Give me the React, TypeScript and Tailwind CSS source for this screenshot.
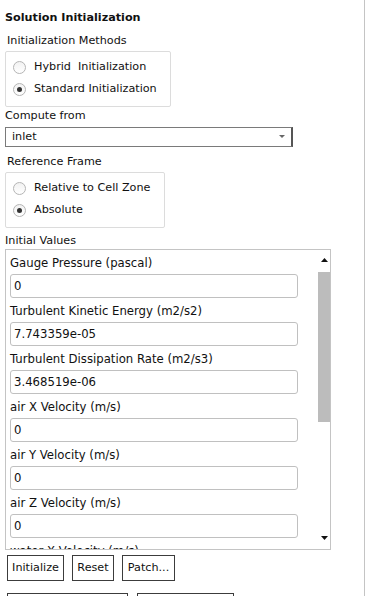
import React from 'react';

const fields = [
    { label: 'Gauge Pressure (pascal)', value: '0' },
    { label: 'Turbulent Kinetic Energy (m2/s2)', value: '7.743359e-05' },
    { label: 'Turbulent Dissipation Rate (m2/s3)', value: '3.468519e-06' },
    { label: 'air X Velocity (m/s)', value: '0' },
    { label: 'air Y Velocity (m/s)', value: '0' },
    { label: 'air Z Velocity (m/s)', value: '0' },
    { label: 'water X Velocity (m/s)', value: '0' },
];

function Radio({ label, checked }: { label: string; checked?: boolean }) {
    return (
        <div className="flex h-[22px] items-center gap-[8px]">
            <span className="flex h-[13px] w-[13px] items-center justify-center rounded-full border border-[#b5b5b5] bg-gradient-to-b from-[#f2f2f2] to-white">
                {checked && <span className="h-[5px] w-[5px] rounded-full bg-[#333]" />}
            </span>
            <span className="whitespace-pre">{label}</span>
        </div>
    );
}

function GroupBox({ width, children }: { width: string; children: React.ReactNode }) {
    return <div className={`mt-[3px] ml-[5px] shrink-0 rounded-[2px] border border-[#dcdcdc] pt-[4px] pb-[6px] pl-[7px] ${width}`}>{children}</div>;
}

function Btn({ label, width }: { label: string; width: string }) {
    return <div className={`flex h-[26px] items-center justify-center border border-[#3c3c3c] bg-white ${width}`}>{label}</div>;
}

export default function App() {
    return (
        <div className="flex h-[596px] w-[368px] overflow-hidden bg-white text-[11.2px] leading-[14px] text-[#111]" style={{ fontFamily: '"DejaVu Sans", Verdana, sans-serif' }}>
            <div className="flex w-[364px] flex-col *:shrink-0">
                <h1 className="mt-[11px] ml-[5px] font-bold">Solution Initialization</h1>
                <div className="mt-[9px] ml-[7px]">Initialization Methods</div>
                <GroupBox width="w-[166px]">
                    <Radio label="Hybrid  Initialization" />
                    <Radio label="Standard Initialization" checked />
                </GroupBox>
                <div className="mt-[2px] ml-[5px]">Compute from</div>
                <div className="mt-[4px] ml-[5px] flex h-[20px] w-[288px] items-center justify-between border border-[#7a7a7a] border-r-2 border-r-[#555] pl-[6px] pr-[6px]">
                    <span>inlet</span>
                    <svg width="6" height="4" viewBox="0 0 6 4">
                        <path d="M0 0h6L3 3z" fill="#666" />
                    </svg>
                </div>
                <div className="mt-[8px] ml-[7px]">Reference Frame</div>
                <GroupBox width="w-[160px]">
                    <Radio label="Relative to Cell Zone" />
                    <Radio label="Absolute" checked />
                </GroupBox>
                <div className="mt-[6px] ml-[5px]">Initial Values</div>
                <div className="mt-[1px] ml-[5px] flex h-[301px] w-[326px] border border-[#c4c4c4]">
                    <div className="flex flex-1 flex-col overflow-hidden pt-[6px] pl-[4px] text-[11.7px]">
                        {fields.map((f) => (
                            <div key={f.label} className="mb-[6px] flex shrink-0 flex-col">
                                <div className="whitespace-nowrap">{f.label}</div>
                                <div className="mt-[4px] flex h-[24px] w-[288px] shrink-0 items-center rounded-[3px] border border-[#c0c0c0] pl-[3px]">{f.value}</div>
                            </div>
                        ))}
                    </div>
                    <div className="flex w-[12px] flex-col items-center">
                        <svg className="mt-[8px] shrink-0" width="7" height="4" viewBox="0 0 7 4">
                            <path d="M3.5 0L7 4H0z" fill="#111" />
                        </svg>
                        <div className="mt-[10px] h-[150px] w-[12px] shrink-0 bg-[#bcbcbc]" />
                        <svg className="mt-auto mb-[9px] shrink-0" width="7" height="4" viewBox="0 0 7 4">
                            <path d="M0 0h7L3.5 4z" fill="#111" />
                        </svg>
                    </div>
                </div>
                <div className="mt-[5px] ml-[7px] flex gap-[8px]">
                    <Btn label="Initialize" width="w-[57px]" />
                    <Btn label="Reset" width="w-[42px]" />
                    <Btn label="Patch..." width="w-[53px]" />
                </div>
                <div className="mt-[12px] ml-[7px] flex gap-[9px]">
                    <div className="h-[26px] w-[121px] border border-[#3c3c3c]" />
                    <div className="h-[26px] w-[97px] border border-[#3c3c3c]" />
                </div>
            </div>
            <div className="w-px shrink-0 bg-[#c4c4c4]" />
        </div>
    );
}
